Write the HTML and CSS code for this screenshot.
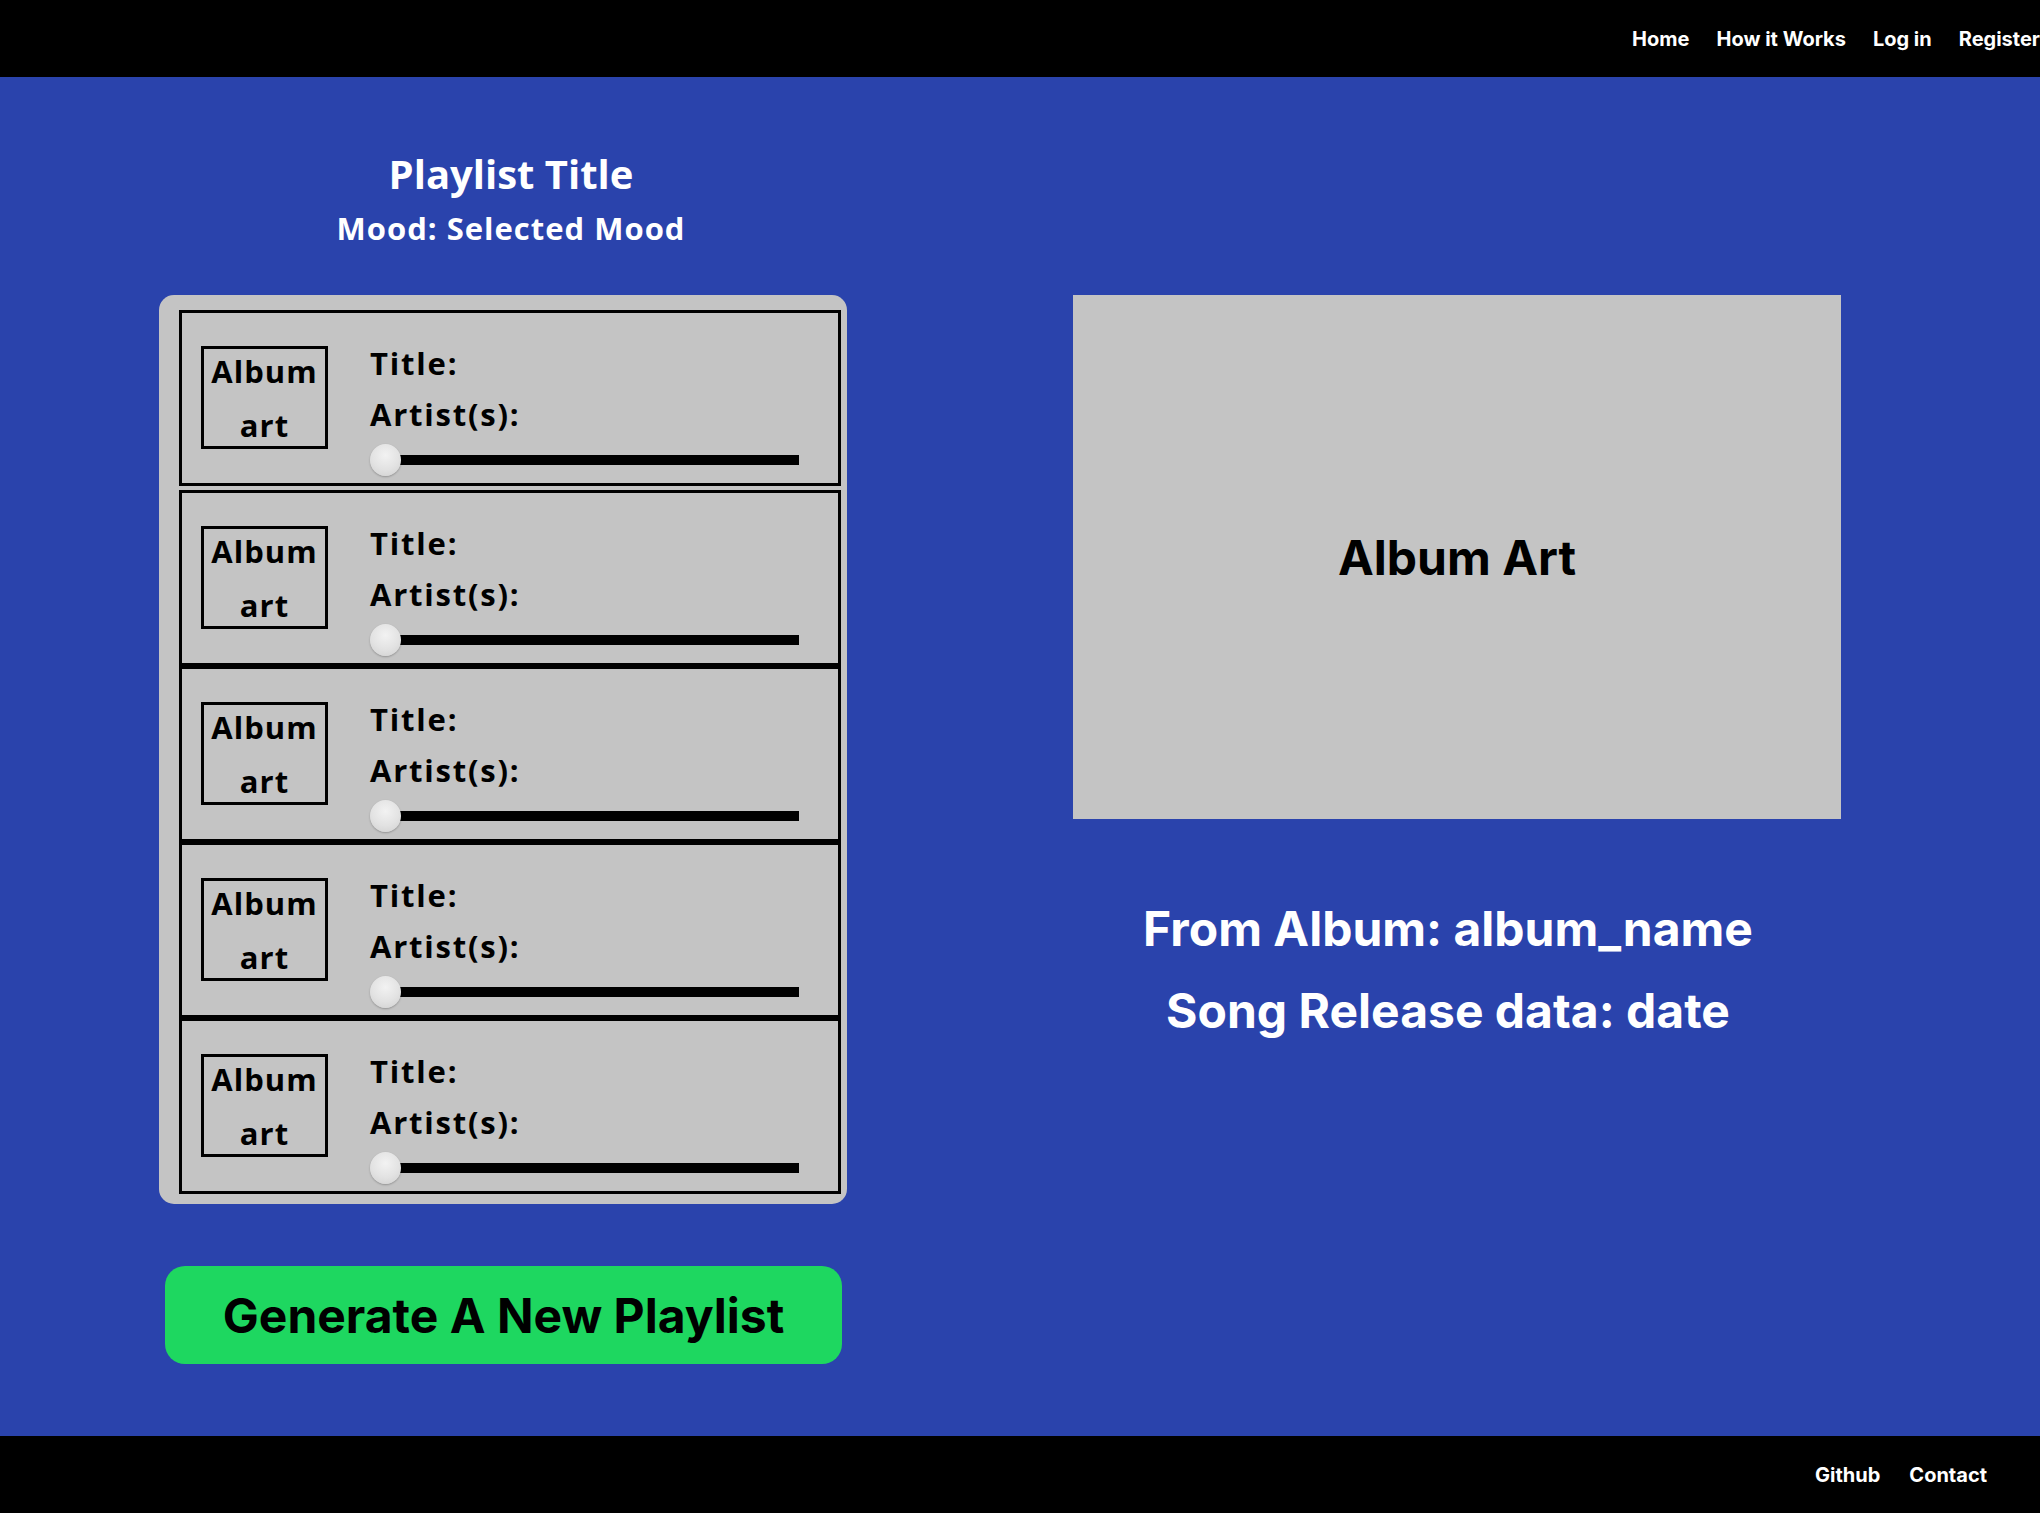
FILE: index.html
```html
<!DOCTYPE html>
<html lang="en">
<head>
<meta charset="utf-8">
<title>Playlist</title>
<link rel="stylesheet" href="styles.css">
</head>
<body>
<header class="topbar">
  <nav class="nav">
    <a class="nav-link" href="#">Home</a>
    <a class="nav-link" href="#">How it Works</a>
    <a class="nav-link" href="#">Log in</a>
    <a class="nav-link" href="#">Register</a>
  </nav>
</header>
<main class="main">
  <section class="left-col">
    <div class="heading">
      <h1 class="playlist-title">Playlist Title</h1>
      <h2 class="mood">Mood: Selected Mood</h2>
    </div>
    <div class="panel">
      <div class="track-row track-row-first">
        <div class="thumb-box"><span>Album</span><span>art</span></div>
        <div class="track-info">
          <div class="info-line">Title:</div>
          <div class="info-line">Artist(s):</div>
          <div class="slider"><div class="slider-track"></div><div class="slider-thumb"></div></div>
        </div>
      </div>
      <div class="track-row">
        <div class="thumb-box"><span>Album</span><span>art</span></div>
        <div class="track-info">
          <div class="info-line">Title:</div>
          <div class="info-line">Artist(s):</div>
          <div class="slider"><div class="slider-track"></div><div class="slider-thumb"></div></div>
        </div>
      </div>
      <div class="track-row">
        <div class="thumb-box"><span>Album</span><span>art</span></div>
        <div class="track-info">
          <div class="info-line">Title:</div>
          <div class="info-line">Artist(s):</div>
          <div class="slider"><div class="slider-track"></div><div class="slider-thumb"></div></div>
        </div>
      </div>
      <div class="track-row">
        <div class="thumb-box"><span>Album</span><span>art</span></div>
        <div class="track-info">
          <div class="info-line">Title:</div>
          <div class="info-line">Artist(s):</div>
          <div class="slider"><div class="slider-track"></div><div class="slider-thumb"></div></div>
        </div>
      </div>
      <div class="track-row">
        <div class="thumb-box"><span>Album</span><span>art</span></div>
        <div class="track-info">
          <div class="info-line">Title:</div>
          <div class="info-line">Artist(s):</div>
          <div class="slider"><div class="slider-track"></div><div class="slider-thumb"></div></div>
        </div>
      </div>
    </div>
    <button class="generate-btn" type="button">Generate A New Playlist</button>
  </section>
  <section class="right-col">
    <div class="art-box">Album Art</div>
    <div class="song-meta">
      <p class="meta-line">From Album: album_name</p>
      <p class="meta-line">Song Release data: date</p>
    </div>
  </section>
</main>
<footer class="footer">
  <a class="foot-link" href="#">Github</a>
  <a class="foot-link" href="#">Contact</a>
</footer>
</body>
</html>
```

FILE: styles.css
```css
* {
  box-sizing: border-box;
}

html, body {
  margin: 0;
  padding: 0;
}

body {
  width: 2040px;
  height: 1513px;
  overflow: hidden;
  display: flex;
  flex-direction: column;
  background: #2a43ac;
  font-family: "Inter", "Liberation Sans", sans-serif;
}

.topbar {
  height: 77px;
  flex: 0 0 77px;
  background: #000;
  display: flex;
  justify-content: flex-end;
  align-items: center;
}

.nav {
  display: flex;
  gap: 27px;
}

.nav-link,
.foot-link {
  color: #fff;
  text-decoration: none;
  font-size: 20px;
  font-weight: 700;
  white-space: nowrap;
}

.main {
  flex: 1;
  display: flex;
}

.left-col {
  width: 688px;
  margin-left: 159px;
  padding-top: 73px;
  display: flex;
  flex-direction: column;
}

.heading {
  text-align: center;
  color: #fff;
  font-family: "Open Sans", "DejaVu Sans", sans-serif;
  padding-left: 16px;
}

.playlist-title {
  margin: 0;
  font-size: 40px;
  line-height: 48px;
  font-weight: 700;
}

.mood {
  margin: 10px 0 0;
  font-size: 31px;
  line-height: 40px;
  font-weight: 700;
  letter-spacing: 1px;
}

.panel {
  margin-top: 47px;
  background: #c4c4c4;
  border-radius: 15px;
  padding: 15px 6px 10px 20px;
}

.track-row {
  height: 176px;
  border: 3px solid #000;
  display: flex;
  align-items: flex-start;
  padding-left: 19px;
  font-family: "Open Sans", "DejaVu Sans", sans-serif;
  font-weight: 700;
  color: #000;
}

.track-row-first {
  margin-bottom: 4px;
}

.thumb-box {
  margin-top: 33px;
  width: 127px;
  height: 103px;
  border: 3px solid #000;
  display: flex;
  flex-direction: column;
  justify-content: center;
  align-items: center;
  font-size: 31px;
  line-height: 54px;
  letter-spacing: 1px;
}

.track-info {
  margin-left: 42px;
  padding-top: 25px;
  width: 430px;
}

.info-line {
  font-size: 31px;
  line-height: 51px;
  letter-spacing: 1.8px;
}

.slider {
  position: relative;
  margin-top: 4px;
  height: 32px;
  width: 429px;
}

.slider-track {
  position: absolute;
  left: 2px;
  right: 0;
  top: 11px;
  height: 10px;
  background: #000;
}

.slider-thumb {
  position: absolute;
  left: 0;
  top: 0;
  width: 31px;
  height: 32px;
  border-radius: 50%;
  background: radial-gradient(circle at 50% 35%, #f2f2f2 0%, #e2e2e2 55%, #cfcfcf 100%);
  box-shadow: 0 1px 2px rgba(0, 0, 0, 0.25);
}

.generate-btn {
  margin-top: 62px;
  margin-left: 6px;
  width: 677px;
  height: 98px;
  border: none;
  border-radius: 20px;
  background: #1ed760;
  color: #000;
  font-family: "Inter", "Liberation Sans", sans-serif;
  font-size: 48px;
  font-weight: 700;
  padding: 0;
  cursor: pointer;
}

.right-col {
  width: 768px;
  margin-left: 226px;
  padding-top: 218px;
}

.art-box {
  width: 768px;
  height: 524px;
  background: #c4c4c4;
  display: flex;
  align-items: center;
  justify-content: center;
  font-size: 48px;
  font-weight: 700;
  color: #000;
}

.song-meta {
  margin-top: 69px;
  padding-right: 18px;
  text-align: center;
  color: #fff;
}

.meta-line {
  margin: 0;
  font-size: 48px;
  line-height: 82px;
  font-weight: 700;
}

.footer {
  height: 77px;
  flex: 0 0 77px;
  background: #000;
  display: flex;
  justify-content: flex-end;
  align-items: center;
  gap: 29px;
  padding-right: 53px;
}
```
